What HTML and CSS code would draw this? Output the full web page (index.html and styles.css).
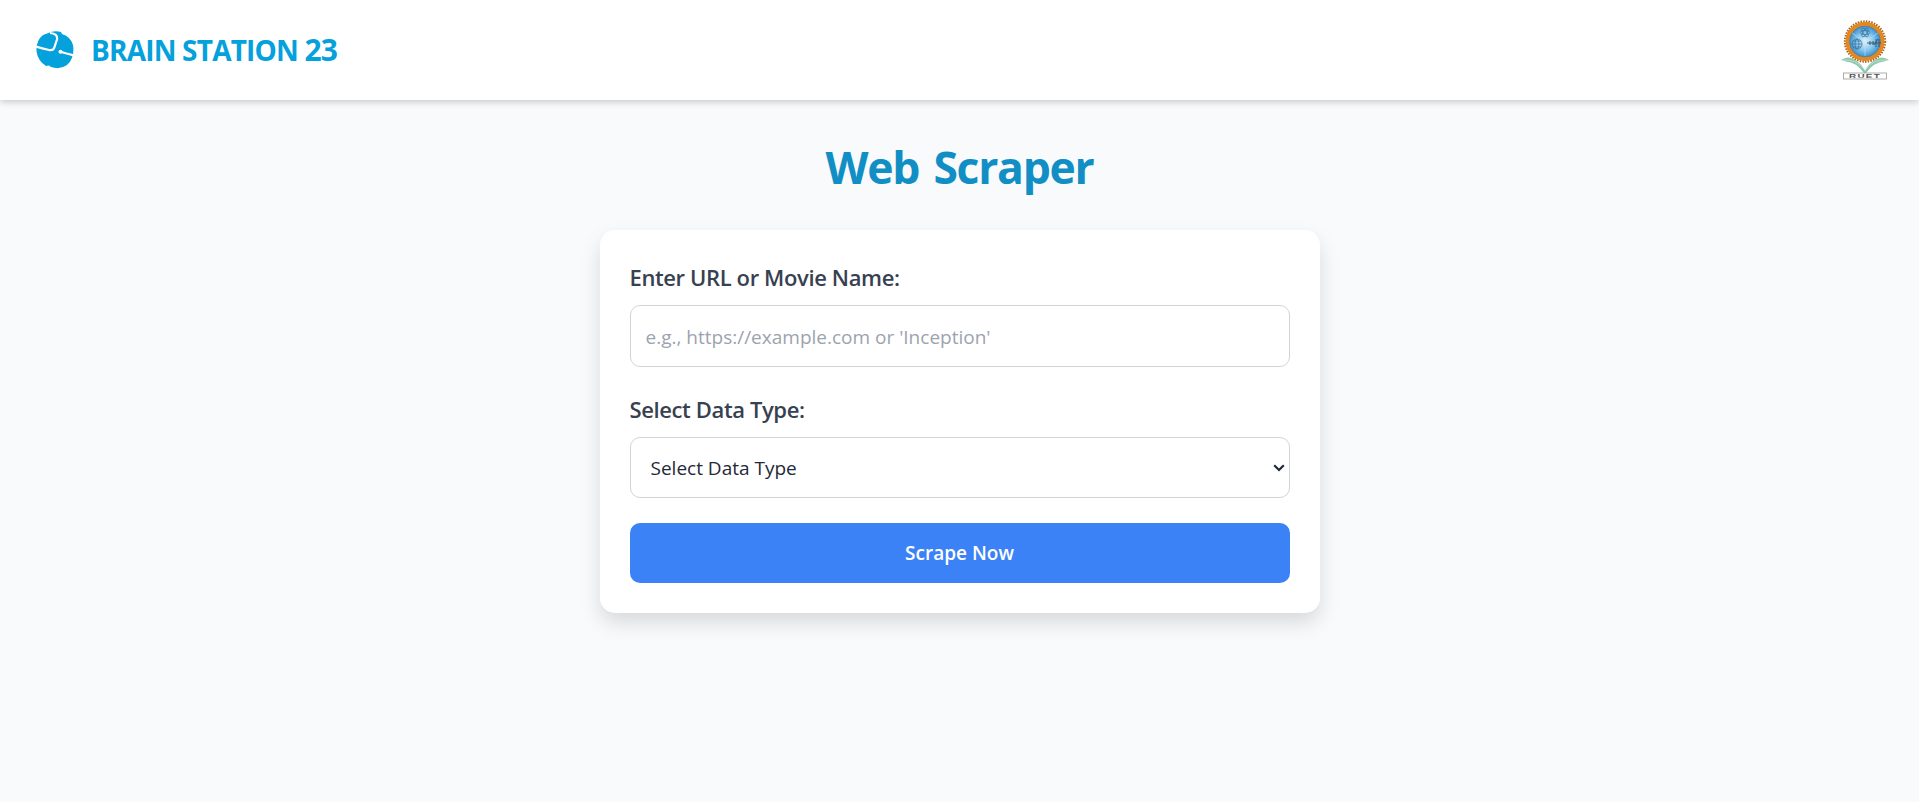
FILE: index.html
```html
<!DOCTYPE html>
<html lang="en">
<head>
<meta charset="utf-8">
<title>Web Scraper</title>
<link rel="stylesheet" href="styles.css">
</head>
<body>
<header class="header">
  <div class="brand">
    <svg class="brand-mark" viewBox="0 0 38 38" aria-hidden="true">
      <path d="M15 1 Q20-.4 25 1 L26 3 Q35 6 37 14 Q39 27 31 34 Q24 39 15 36 L13 34.500 L10 35 Q2 30 .6 21 Q-.5 10 7 4 Z" fill="#04a1dd"/>
      <path d="M14 2 Q22 2.500 21 8.500 L18.500 16 Q17.500 20 13 19 Q6 17.500 0 15.500" fill="none" stroke="#fff" stroke-width="2.200"/>
      <path d="M24.500 20.700 Q30 22.500 38 24.500" fill="none" stroke="#fff" stroke-width="2.200"/>
      <circle cx="24.500" cy="20.700" r="2" fill="#fff"/>
    </svg>
    <span class="brand-name">BRAIN STATION <span class="brand-number">23</span></span>
  </div>
  <svg class="crest" viewBox="0 0 50 62" role="img" aria-label="RUET">
    <defs><radialGradient id="sky"><stop offset="0" stop-color="#e2f5ff"/><stop offset=".5" stop-color="#86c8ee"/><stop offset="1" stop-color="#237fc4"/></radialGradient></defs>
    <circle cx="25" cy="22.500" r="20" fill="none" stroke="#a8641e" stroke-width="2.400" stroke-dasharray="1.500 1.200"/>
    <circle cx="25" cy="22.500" r="17.500" fill="url(#sky)" stroke="#e38720" stroke-width="4"/>
    <circle cx="25" cy="22.500" r="15.400" fill="none" stroke="#607582" stroke-width=".6"/>
    <path d="M25 23 L12 14 M25 23 L38 14 M25 23 V37" stroke="#c3dfeb" stroke-width=".6"/>
    <g fill="none" stroke="#376f99" stroke-width=".7">
      <ellipse cx="25" cy="13.500" rx="5" ry="2"/><ellipse cx="25" cy="13.500" rx="5" ry="2" transform="rotate(60 25 13.500)"/><ellipse cx="25" cy="13.500" rx="5" ry="2" transform="rotate(-60 25 13.500)"/>
      <circle cx="17" cy="25" r="5"/><ellipse cx="17" cy="25" rx="2" ry="5"/><path d="M12 25 H22 M13 22 H21 M13 28 H21"/>
    </g>
    <path d="M27 24 H41 M30 22 V26 M33 22 V26 M36 20 V28 M39 20 V28 M34 26 L38 20" stroke="#3c5872" stroke-width="1"/>
    <path d="M1 41 Q8 36 15 41 Q22 45 25 52 Q28 45 35 41 Q42 36 49 41 L44 42.500 Q34 43 26 54 H24 Q16 43 6 42.500 Z" fill="#8cc8ae"/>
    <path d="M3 41 Q16 40 24 50 M47 41 Q34 40 26 50" stroke="#e0f2e8" fill="none" stroke-width=".5"/>
    <rect x="3.500" y="54" width="43" height="6" fill="#fff" stroke="#999" stroke-width=".8"/>
    <text x="25" y="59.100" text-anchor="middle" textLength="32" lengthAdjust="spacingAndGlyphs" class="crest-text">RUET</text>
  </svg>
</header>
<main class="main">
  <h1 class="title">Web Scraper</h1>
  <form class="card">
    <label class="label" for="url">Enter URL or Movie Name:</label>
    <input class="field input" id="url" type="text" placeholder="e.g., https://example.com or 'Inception'">
    <label class="label" for="type">Select Data Type:</label>
    <div class="select-wrap">
      <select class="field select" id="type"><option>Select Data Type</option></select>
      <svg class="chevron" viewBox="0 0 12 8" aria-hidden="true"><path d="M1.200 1.200 L6 6 L10.800 1.200"/></svg>
    </div>
    <button class="button" type="button">Scrape Now</button>
  </form>
</main>
</body>
</html>
```
FILE: styles.css
```css
* { box-sizing: border-box; }
body { margin: 0; min-height: 100vh; background: #f9fafc; color: #1f2937; font-family: "Open Sans", "Noto Sans", sans-serif; }
.header { height: 100px; padding: 0 29px 0 36px; display: flex; align-items: center; justify-content: space-between; background: #fff; box-shadow: 0 2px 7px rgba(0,0,0,.2); }
.brand { display: flex; align-items: center; gap: 17px; }
.brand-mark { width: 38px; height: 38px; }
.brand-name { color: #04a1dd; font-size: 28px; line-height: 38px; font-weight: 700; letter-spacing: -.8px; white-space: nowrap; }
.brand-number { font-size: 30px; }
.crest { width: 50px; height: 62px; }
.crest-text { font: 700 6px "Liberation Sans", sans-serif; letter-spacing: .8px; fill: #555; }
.main { display: flex; flex-direction: column; align-items: center; padding-top: 34px; }
.title { margin: 0 0 31px; height: 65px; color: #118fc4; font-size: 44.5px; line-height: 65px; font-weight: 700; letter-spacing: -1.3px; word-spacing: 4px; white-space: nowrap; }
.card { width: 720px; height: 383px; padding: 30px; border-radius: 15px; background: #fff; box-shadow: 0 10px 20px rgba(0,0,0,.13); display: flex; flex-direction: column; }
.label { height: 34px; margin-bottom: 11px; font-size: 22px; line-height: 34px; font-weight: 600; letter-spacing: -.38px; color: #374151; white-space: nowrap; }
.field { width: 100%; border: 1px solid #d1d5db; border-radius: 10px; background: #fff; font-family: inherit; font-size: 19px; color: #1f2937; }
.input { height: 62px; margin: 0 0 25px; padding: 1px 15px 0; }
.input::placeholder { color: #9ca3af; opacity: 1; }
.select-wrap { display: grid; align-items: center; margin-bottom: 25px; }
.select { grid-area: 1 / 1; height: 61px; padding: 1px 0 0 20px; appearance: none; }
.chevron { grid-area: 1 / 1; justify-self: end; width: 12px; height: 8px; margin-right: 5px; pointer-events: none; fill: none; stroke: #1f2937; stroke-width: 2.2; }
.button { height: 60px; padding: 0; border: 0; border-radius: 10px; background: #3b82f6; color: #fff; font-family: inherit; font-size: 19px; font-weight: 600; }
```
